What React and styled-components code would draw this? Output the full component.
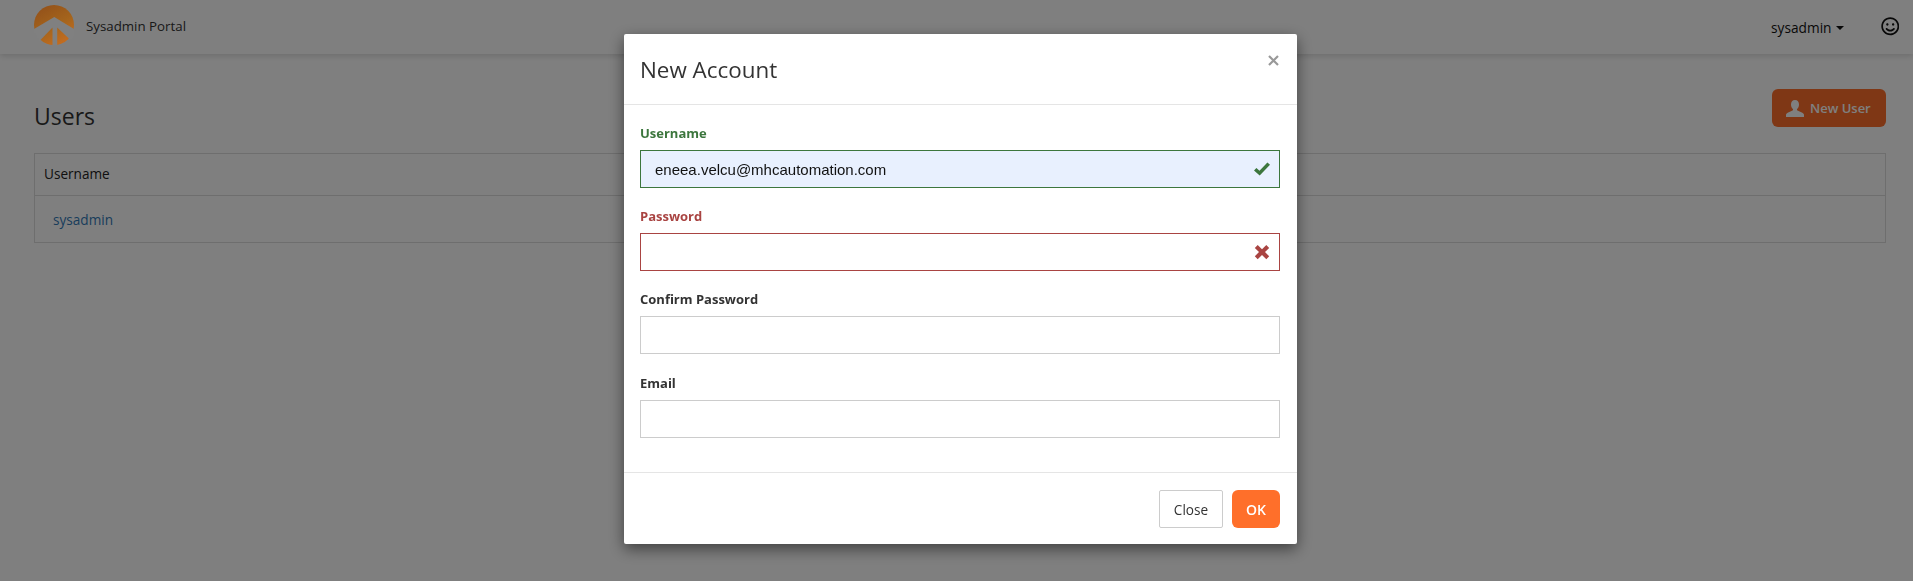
import React from "react";
import styled, { createGlobalStyle } from "styled-components";
import { FaRegSmile } from "react-icons/fa";

const Global = createGlobalStyle`
  html, body {
    margin: 0;
    height: 100%;
    overflow: hidden;
    background: #fff;
    font-family: "Open Sans", "Noto Sans", sans-serif;
    font-size: 13px;
    color: #333;
  }
  * { box-sizing: border-box; }
`;

const Navbar = styled.header`
  display: flex;
  align-items: center;
  height: 54px;
  padding: 0 14px 0 34px;
  background: #fff;
  box-shadow: 0 2px 6px rgba(0, 0, 0, 0.15);
`;

const Brand = styled.div`
  display: flex;
  align-items: center;
  gap: 12px;
  font-size: 13.3px;
  color: #333;
`;

const BrandName = styled.span`
  margin-top: -2px;
`;

const LogoSvg = styled.svg`
  position: relative;
  z-index: 2;
  margin-top: -4px;
`;

const UserMenu = styled.div`
  margin-left: auto;
  display: flex;
  align-items: center;
  font-size: 13.7px;
  color: #111;
`;

const Caret = styled.span`
  width: 0;
  height: 0;
  margin: 2px 0 0 4px;
  border-left: 4px solid transparent;
  border-right: 4px solid transparent;
  border-top: 4px solid #111;
`;

const Smiley = styled(FaRegSmile)`
  margin-left: 37px;
  margin-top: -1px;
  font-size: 18.500px;
  color: #111;
`;

const Content = styled.main`
  padding: 0 27px 0 34px;
`;

const TitleRow = styled.div`
  display: flex;
  align-items: flex-start;
  justify-content: space-between;
  padding-top: 35px;
  height: 99px;
`;

const Title = styled.h2`
  margin: 10px 0 0;
  font-size: 23px;
  font-weight: 400;
  line-height: 34px;
  color: #333;
`;

const NewUser = styled.button`
  display: flex;
  align-items: center;
  gap: 6px;
  height: 38px;
  width: 114px;
  padding: 0 14px;
  border: 0;
  border-radius: 6px;
  background: #ff6f2a;
  color: #fff;
  font: 600 13px "Open Sans", sans-serif;
`;

const Table = styled.div`
  border: 1px solid #ddd;
  font-size: 13.600px;
`;

const HeadRow = styled.div`
  display: flex;
  align-items: center;
  height: 42px;
  padding: 0 0 2px 9px;
  border-bottom: 1px solid #ddd;
  color: #222;
`;

const BodyRow = styled.div`
  display: flex;
  align-items: center;
  height: 46px;
  padding-left: 18px;
`;

const UserLink = styled.a`
  color: #337ab7;
`;

const Backdrop = styled.div`
  position: fixed;
  inset: 0;
  display: flex;
  justify-content: center;
  align-items: flex-start;
  padding: 34px 0 0 8px;
  background: rgba(0, 0, 0, 0.5);
`;

const Modal = styled.section`
  width: 673px;
  height: 510px;
  display: flex;
  flex-direction: column;
  background: #fff;
  border-radius: 2px;
  box-shadow: 0 5px 15px rgba(0, 0, 0, 0.5);
`;

const ModalHead = styled.div`
  position: relative;
  height: 71px;
  padding: 0 16px;
  display: flex;
  align-items: center;
  border-bottom: 1px solid #e5e5e5;
`;

const ModalTitle = styled.h4`
  margin: 0;
  font-size: 22.400px;
  font-weight: 400;
  color: #333;
`;

const CloseX = styled.svg`
  position: absolute;
  top: 21px;
  right: 18px;
  width: 11px;
  height: 11px;
`;

const ModalBody = styled.div`
  flex: 1;
  padding: 18px 17px 0 16px;
`;

const Field = styled.div`
  height: 83.200px;
`;

const Label = styled.label`
  display: block;
  height: 27px;
  padding-top: 1px;
  font-size: 13px;
  font-weight: 700;
  line-height: 19px;
  color: ${p => p.$color || "#333"};
`;

const InputWrap = styled.div`
  position: relative;
`;

const Input = styled.input`
  display: block;
  width: 100%;
  height: 38px;
  padding: 0 14px;
  border: 1px solid ${p => p.$color || "#ccc"};
  border-radius: 0;
  background: ${p => p.$bg || "#fff"};
  color: #111;
  font: 15px "Liberation Sans", Arial, sans-serif;
  outline: none;
`;

const StateIcon = styled.svg`
  position: absolute;
  top: 10px;
  right: 9px;
  width: 18px;
  height: 18px;
`;

const ModalFoot = styled.div`
  height: 72px;
  padding: 17px 17px 0 0;
  display: flex;
  justify-content: flex-end;
  gap: 9px;
  border-top: 1px solid #e5e5e5;
`;

const FootButton = styled.button`
  height: 38px;
  padding: 0;
  width: ${p => p.$primary ? "48px" : "64px"};
  border: ${p => p.$primary ? "0" : "1px solid #ccc"};
  border-radius: ${p => p.$primary ? "6px" : "2px"};
  background: ${p => p.$primary ? "#ff6f2a" : "#fff"};
  color: ${p => p.$primary ? "#fff" : "#333"};
  font: ${p => p.$primary ? 600 : 400} ${p => p.$primary ? "14px" : "13.600px"} "Open Sans", sans-serif;
`;

const Logo = () => (
  <LogoSvg width="40" height="40" viewBox="33.5 5 40 40">
    <defs>
      <linearGradient id="logoFill" x1="0.1" y1="0.1" x2="0.6" y2="1">
        <stop offset="0" stopColor="#94521a" />
        <stop offset="0.55" stopColor="#a4641c" />
        <stop offset="1" stopColor="#c26c20" />
      </linearGradient>
    </defs>
    <circle cx="53.5" cy="25" r="20" fill="url(#logoFill)" />
    <polygon
      fill="#808080"
      points="53.800,17 75,30 71,41 56.700,27.500 56.700,46 52,46 52,27.500 39,41 32,30"
    />
  </LogoSvg>
);

const UserGlyph = () => (
  <svg width="18" height="17" viewBox="0 0 18 17" fill="#fff">
    <path d="M9 0c2.600 0 4 2 4 4.400 0 2-.9 3.700-1.900 4.700-.3.500-.2 1.200.4 1.500l4.800 2.200c1 .5 1.700 1.300 1.700 2.200V17H0v-2c0-.9.7-1.700 1.700-2.200l4.800-2.200c.6-.3.7-1 .4-1.500C5.900 8.100 5 6.400 5 4.400 5 2 6.400 0 9 0z" />
  </svg>
);

const CheckGlyph = () => (
  <StateIcon viewBox="0 0 18 18" fill="#3c763d">
    <path d="M6.700 15.500 1 10.600l2.400-2.500 3.100 2.700L14.400 2.400 17 4.800z" />
  </StateIcon>
);

const CrossGlyph = () => (
  <StateIcon viewBox="0 0 18 18" fill="#a94442">
    <path d="M4.700 2 9 6.200 13.300 2 16.200 5 12 9.100l4.200 4.200-2.900 2.900L9 12l-4.300 4.200-2.900-2.900L6 9.100 1.800 5z" />
  </StateIcon>
);

const App = () => (
  <>
    <Global />
    <Navbar>
      <Brand>
        <Logo />
        <BrandName>Sysadmin Portal</BrandName>
      </Brand>
      <UserMenu>
        sysadmin
        <Caret />
        <Smiley />
      </UserMenu>
    </Navbar>
    <Content>
      <TitleRow>
        <Title>Users</Title>
        <NewUser>
          <UserGlyph />
          New User
        </NewUser>
      </TitleRow>
      <Table>
        <HeadRow>Username</HeadRow>
        <BodyRow>
          <UserLink>sysadmin</UserLink>
        </BodyRow>
      </Table>
    </Content>
    <Backdrop>
      <Modal>
        <ModalHead>
          <ModalTitle>New Account</ModalTitle>
          <CloseX viewBox="0 0 11 11" stroke="#999" strokeWidth="2.200">
            <path d="M1 1l9 9M10 1l-9 9" />
          </CloseX>
        </ModalHead>
        <ModalBody>
          <Field>
            <Label $color="#3c763d">Username</Label>
            <InputWrap>
              <Input
                $color="#3c763d"
                $bg="#e8f0fe"
                defaultValue="eneea.velcu@mhcautomation.com"
              />
              <CheckGlyph />
            </InputWrap>
          </Field>
          <Field>
            <Label $color="#a94442">Password</Label>
            <InputWrap>
              <Input $color="#a94442" />
              <CrossGlyph />
            </InputWrap>
          </Field>
          <Field>
            <Label>Confirm Password</Label>
            <InputWrap>
              <Input />
            </InputWrap>
          </Field>
          <Field>
            <Label>Email</Label>
            <InputWrap>
              <Input />
            </InputWrap>
          </Field>
        </ModalBody>
        <ModalFoot>
          <FootButton>Close</FootButton>
          <FootButton $primary>OK</FootButton>
        </ModalFoot>
      </Modal>
    </Backdrop>
  </>
);

export default App;
